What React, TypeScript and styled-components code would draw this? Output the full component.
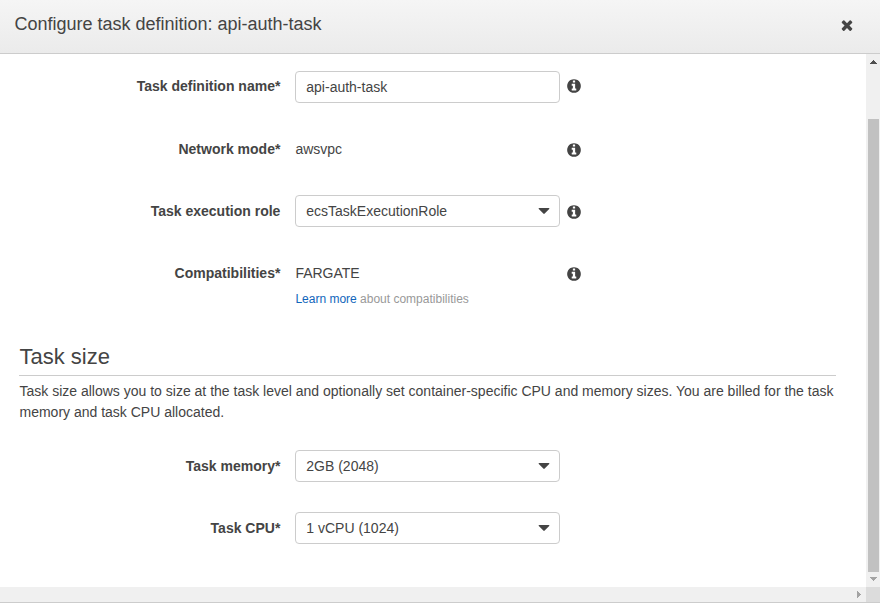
import React from "react";
import styled, { createGlobalStyle } from "styled-components";

const GlobalStyle = createGlobalStyle`
  * { box-sizing: border-box; }
  body { margin: 0; background: #fff; overflow: hidden; }
`;

const Dialog = styled.section`
  width: 880px;
  height: 603px;
  display: flex;
  flex-direction: column;
  border-bottom: 1px solid #ccc;
  background: #fff;
  color: #444;
  font: 14px/21px "Liberation Sans", Arial, sans-serif;
`;

const Header = styled.header`
  height: 54px;
  flex: none;
  display: flex;
  justify-content: space-between;
  padding: 13px 25px 0 14.4px;
  border-bottom: 1px solid #ccc;
  background: linear-gradient(#f5f5f5, #ebebeb);
`;

const Title = styled.h1`
  margin: 0;
  font-size: 18px;
  font-weight: 400;
  line-height: 22px;
`;

const CloseButton = styled.button`
  width: 16px;
  height: 16px;
  margin-top: 4px;
  padding: 0;
  border: 0;
  background: none;
  color: #444;
`;

const Icon = styled.svg`
  display: block;
  width: 16px;
  height: 16px;
  fill: currentColor;
`;

const Viewport = styled.div`
  flex: 1;
  display: grid;
  grid-template: 1fr 15px / 1fr 14px;
`;

const Content = styled.main`
  padding: 17px 30px 0 19px;
`;

const Row = styled.div<{ $height?: number }>`
  display: grid;
  grid-template-columns: 261.4px 265px 16px;
  column-gap: 14.6px;
  align-items: start;
  height: ${(p) => p.$height ?? 62}px;
`;

const Label = styled.label<{ $top?: number }>`
  padding-top: ${(p) => p.$top ?? 6}px;
  text-align: right;
  font-weight: 700;
`;

const Field = styled.input`
  width: 265px;
  height: 32px;
  padding: 0 10px 0 10.3px;
  border: 1px solid #ccc;
  border-radius: 4px;
  background: #fff;
  color: #444;
  font: inherit;
  outline: 0;
`;

const Select = styled.div`
  height: 32px;
  display: flex;
  align-items: center;
  justify-content: space-between;
  padding: 0 9px 0 10.3px;
  border: 1px solid #ccc;
  border-radius: 4px;
  background: #fff;
`;

const Caret = styled.svg`
  width: 12px;
  height: 6px;
  fill: #444;
`;

const Value = styled.div`
  padding: 6px 0 0 0.4px;
`;

const Hint = styled.div`
  margin-top: 5px;
  font-size: 12px;
  color: #999;
`;

const Link = styled.a`
  color: #1166bb;
  text-decoration: none;
`;

const InfoSlot = styled.span<{ $top: number }>`
  padding-top: ${(p) => p.$top}px;
  margin-left: -8.6px;
`;

const SectionTitle = styled.h2`
  margin: 0 0 5px;
  padding-left: 0.5px;
  height: 33px;
  border-bottom: 1px solid #ccc;
  font-size: 22px;
  font-weight: 400;
  line-height: 27px;
`;

const Description = styled.p`
  margin: 0 0 27px;
  padding-left: 0.5px;
`;

const VerticalBar = styled.div`
  display: flex;
  flex-direction: column;
  padding: 6px 0 0 2px;
  background: #f0f0f0;
`;

const VerticalThumb = styled.div`
  width: 11px;
  height: 453px;
  margin: 55px 0 5px;
  background: #c1c1c1;
`;

const HorizontalBar = styled.div`
  display: flex;
  align-items: center;
  justify-content: flex-end;
  padding-right: 5px;
  background: #f0f0f0;
`;

const Corner = styled.div`
  background: #dcdcdc;
`;

const VerticalArrow = styled.svg`
  display: block;
  flex: none;
  width: 7px;
  height: 4px;
  margin-left: 2px;
`;

const HorizontalArrow = styled.svg`
  display: block;
  flex: none;
  width: 4px;
  height: 7px;
`;

const Info = ({ top = 9 }: { top?: number }) => (
  <InfoSlot $top={top}>
    <Icon viewBox="0 0 1792 1792">
      <path d="M1152 1376v-160q0-14-9-23t-23-9h-96v-512q0-14-9-23t-23-9h-320q-14 0-23 9t-9 23v160q0 14 9 23t23 9h96v320h-96q-14 0-23 9t-9 23v160q0 14 9 23t23 9h448q14 0 23-9t9-23zm-128-896v-160q0-14-9-23t-23-9h-192q-14 0-23 9t-9 23v160q0 14 9 23t23 9h192q14 0 23-9t9-23zm640 416q0 209-103 385.5t-279.5 279.5-385.5 103-385.5-103-279.5-279.5-103-385.5 103-385.5 279.5-279.5 385.5-103 385.5 103 279.5 279.5 103 385.5z" />
    </Icon>
  </InfoSlot>
);

const Dropdown = ({ value }: { value: string }) => (
  <Select role="combobox">
    <span>{value}</span>
    <Caret viewBox="0 0 12 6">
      <path d="M1.3 0h9.4q1.1.2.5 1L6.7 5.6q-.7.6-1.4 0L.8 1Q.2.2 1.3 0z" />
    </Caret>
  </Select>
);

export default function App() {
  return (
    <>
      <GlobalStyle />
      <Dialog>
        <Header>
          <Title>Configure task definition: api-auth-task</Title>
          <CloseButton aria-label="Close">
            <Icon viewBox="0 0 1792 1792">
              <path d="M1490 1322q0 40-28 68l-136 136q-28 28-68 28t-68-28l-294-294-294 294q-28 28-68 28t-68-28l-136-136q-28-28-28-68t28-68l294-294-294-294q-28-28-28-68t28-68l136-136q28-28 68-28t68 28l294 294 294-294q28-28 68-28t68 28l136 136q28 28 28 68t-28 68l-294 294 294 294q28 28 28 68z" />
            </Icon>
          </CloseButton>
        </Header>
        <Viewport>
          <Content>
            <Row>
              <Label $top={5}>Task definition name*</Label>
              <Field defaultValue="api-auth-task" />
              <Info top={7} />
            </Row>
            <Row>
              <Label>Network mode*</Label>
              <Value>awsvpc</Value>
              <Info />
            </Row>
            <Row>
              <Label>Task execution role</Label>
              <Dropdown value="ecsTaskExecutionRole" />
              <Info />
            </Row>
            <Row $height={86}>
              <Label>Compatibilities*</Label>
              <Value>
                FARGATE
                <Hint>
                  <Link>Learn more</Link> about compatibilities
                </Hint>
              </Value>
              <Info />
            </Row>
            <SectionTitle>Task size</SectionTitle>
            <Description>
              Task size allows you to size at the task level and optionally set
              container-specific CPU and memory sizes. You are billed for the
              task memory and task CPU allocated.
            </Description>
            <Row>
              <Label>Task memory*</Label>
              <Dropdown value="2GB (2048)" />
            </Row>
            <Row>
              <Label>Task CPU*</Label>
              <Dropdown value="1 vCPU (1024)" />
            </Row>
          </Content>
          <VerticalBar>
            <VerticalArrow viewBox="0 0 7 4">
              <path d="M3 0h1v1h1v1h1v1h1v1H0V3h1V2h1V1h1z" fill="#505050" />
            </VerticalArrow>
            <VerticalThumb />
            <VerticalArrow viewBox="0 0 7 4">
              <path d="M0 0h7v1H6v1H5v1H4v1H3V3H2V2H1V1H0z" fill="#a3a3a3" />
            </VerticalArrow>
          </VerticalBar>
          <HorizontalBar>
            <HorizontalArrow viewBox="0 0 4 7">
              <path d="M0 0h1v1h1v1h1v1h1v1H3v1H2v1H1v1H0z" fill="#a3a3a3" />
            </HorizontalArrow>
          </HorizontalBar>
          <Corner />
        </Viewport>
      </Dialog>
    </>
  );
}
